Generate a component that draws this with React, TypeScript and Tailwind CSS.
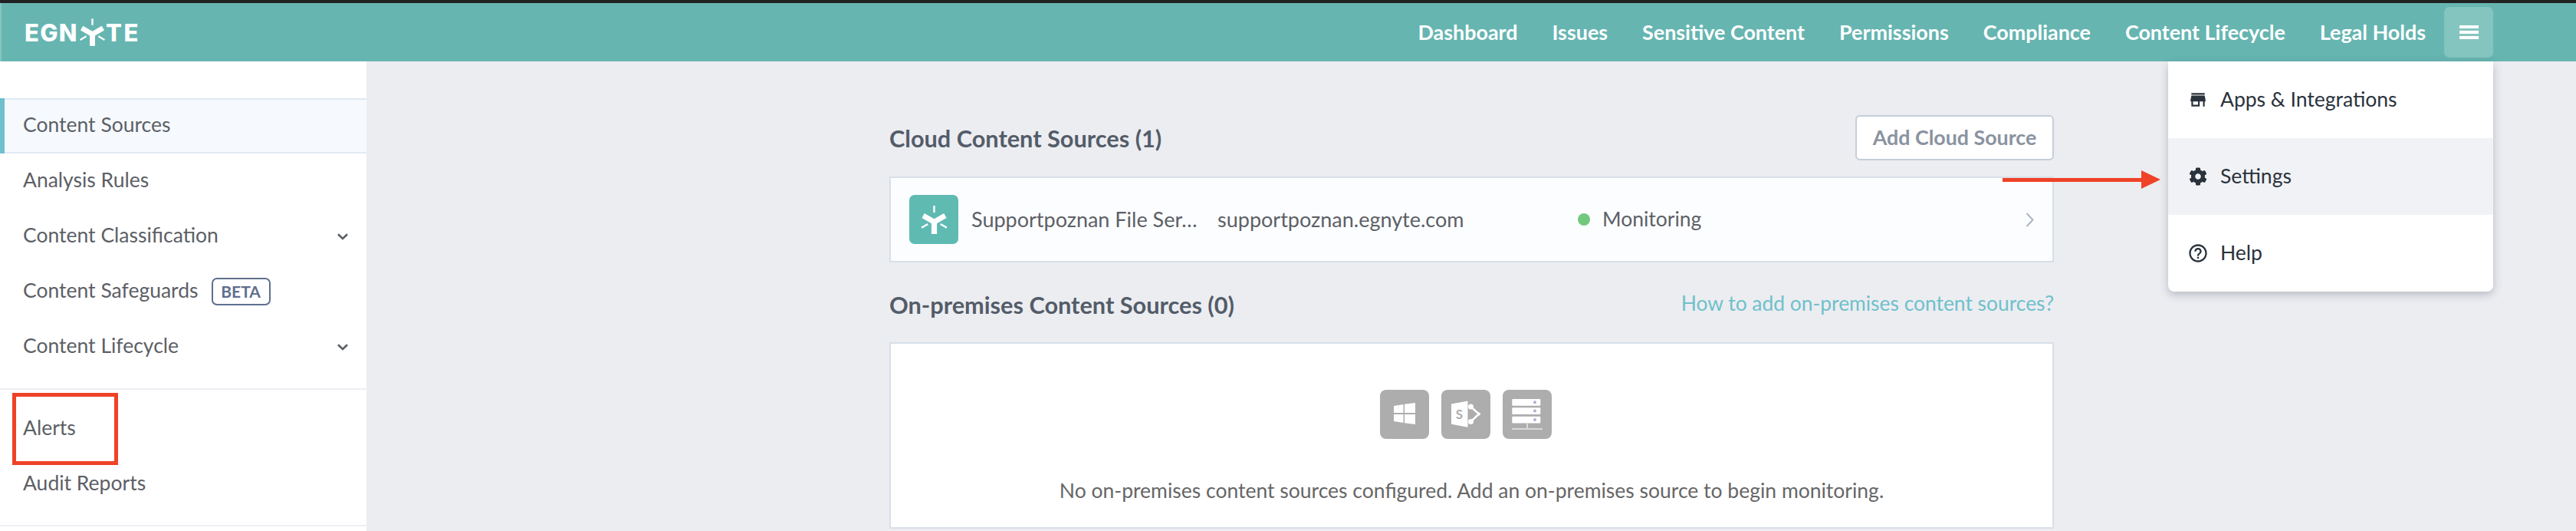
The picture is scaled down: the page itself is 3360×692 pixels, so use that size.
import React from "react";
import { MdStore, MdOutlineHelpOutline } from "react-icons/md";
import { FaCog } from "react-icons/fa";

const font = { fontFamily: '"Source Sans Pro", Lato, "Noto Sans", sans-serif' };

const navLinks = ["Dashboard", "Issues", "Sensitive Content", "Permissions", "Compliance", "Content Lifecycle", "Legal Holds"];

const Star: React.FC<{ className: string }> = ({ className }) => (
  <svg viewBox="0 0 100 108" className={className} fill="none" stroke="currentColor">
    <path d="M50 0V26M2 84L26 70M74 70L98 84" strokeWidth="7" />
    <path d="M8 38L50 62L92 38" strokeWidth="20" />
    <path d="M50 58V108" strokeWidth="21" />
  </svg>
);

const Chevron: React.FC = () => (
  <svg viewBox="0 0 14 9" className="h-[9px] w-[14px]" fill="none" stroke="#5c6066" strokeWidth="2.6">
    <path d="M1 1.2L7 7L13 1.2" />
  </svg>
);

const SideItem: React.FC<{ label: string; active?: boolean; chevron?: boolean; beta?: boolean }> = ({ label, active, chevron, beta }) => (
  <div
    className={`flex h-[72px] items-center pl-[30px] pr-[24px] text-[26.5px] text-[#5c6066] ${
      active ? "relative border-y-2 border-[#e0eaf5] bg-[#f6faff]" : ""
    }`}
  >
    {active && <div className="absolute -top-[2px] -bottom-[2px] left-0 w-[6px] bg-[#6fc0cc]" />}
    <span className="-mt-[3px]">{label}</span>
    {beta && (
      <span className="ml-[17px] flex h-[36px] w-[77px] items-center justify-center rounded-[7px] border-2 border-[#5f6f8f] text-[21px] font-bold text-[#5f6f8f]">
        BETA
      </span>
    )}
    {chevron && (
      <span className="ml-auto">
        <Chevron />
      </span>
    )}
  </div>
);

const Tile: React.FC<{ children: React.ReactNode }> = ({ children }) => (
  <div className="h-[64px] w-[64px] rounded-[8px] bg-[#adadad]">
    <svg viewBox="0 0 64 64" className="h-[64px] w-[64px]">
      {children}
    </svg>
  </div>
);

const MenuItem: React.FC<{ icon: React.ReactNode; label: string; hover?: boolean }> = ({ icon, label, hover }) => (
  <div className={`flex h-[100px] items-center pl-[27px] text-[26.5px] text-[#2a323c] ${hover ? "bg-[#f1f2f5]" : ""}`}>
    <span className="flex w-[24px] items-center justify-center">{icon}</span>
    <span className="ml-[17px]">{label}</span>
  </div>
);

const App: React.FC = () => {
  return (
    <div className="relative flex h-[692px] w-[3360px] flex-col overflow-hidden border-t-4 border-[#222222] bg-[#ecedf1]" style={font}>
      <header className="flex h-[76px] items-center border-l-2 border-[#85c5bf] bg-[#66b5b1] pl-[30px] pr-[108px] text-white">
        <div className="flex items-center text-[31px] font-extrabold leading-none">
          <span className="w-[72px] font-['Inter'] tracking-[1.3px]">EGN</span>
          <Star className="-mt-[1px] h-[36px] w-[33px] shrink-0" />
          <span className="ml-[1px] font-['Inter'] tracking-[2.5px]">TE</span>
        </div>
        <nav className="ml-auto flex items-center gap-[45px] text-[26.9px] font-bold">
          {navLinks.map((link) => (
            <span key={link}>{link}</span>
          ))}
        </nav>
        <button className="ml-[24px] flex h-[66px] w-[64px] flex-col items-center justify-center gap-[3px] rounded-[7px] bg-[#85c5bf]">
          <span className="h-[4px] w-[25px] bg-white" />
          <span className="h-[4px] w-[25px] bg-white" />
          <span className="h-[4px] w-[25px] bg-white" />
        </button>
      </header>

      <div className="flex min-h-0 flex-1">
        <aside className="w-[478px] bg-white pt-[48px]">
          <SideItem label="Content Sources" active />
          <SideItem label="Analysis Rules" />
          <SideItem label="Content Classification" chevron />
          <SideItem label="Content Safeguards" beta />
          <SideItem label="Content Lifecycle" chevron />
          <div className="mt-[18px] border-t-2 border-[#eeeff4] pt-[15px]">
            <SideItem label="Alerts" />
            <SideItem label="Audit Reports" />
          </div>
          <div className="mt-[17px] border-t-2 border-[#eeeff4]" />
        </aside>

        <main className="w-[1520px] pl-[682px] pr-0">
          <div className="w-[1519px]">
            <div className="mt-[70px] flex h-[59px] items-center justify-between">
              <h2 className="mt-[3px] text-[30.7px] font-bold text-[#535c69]">Cloud Content Sources (1)</h2>
              <button className="h-[59px] w-[259px] rounded-[6px] border-2 border-[#c5ced9] bg-white text-[26.8px] font-bold text-[#8a93a0]">
                Add Cloud Source
              </button>
            </div>
            <div className="mt-[21px] flex h-[112px] items-center border-2 border-[#d8dfe9] bg-[#fcfdff] pl-[24px] pr-[24px] text-[27px] text-[#5c6066]">
              <div className="flex h-[64px] w-[64px] items-center justify-center rounded-[7px] bg-[#5fbab2] text-white">
                <Star className="h-[37px] w-[35px]" />
              </div>
              <span className="ml-[17px] w-[321px] whitespace-nowrap">Supportpoznan File Ser…</span>
              <span className="w-[470px]">supportpoznan.egnyte.com</span>
              <span className="h-[16px] w-[16px] rounded-full bg-[#72c97e]" />
              <span className="ml-[16px] text-[26.5px]">Monitoring</span>
              <svg viewBox="0 0 11 19" className="ml-auto h-[19px] w-[11px]" fill="none" stroke="#adb5c2" strokeWidth="2">
                <path d="M1.5 1L9.5 9.5L1.5 18" />
              </svg>
            </div>
            <div className="mt-[38px] flex h-[36px] items-center justify-between">
              <h2 className="text-[30.7px] font-bold text-[#535c69]">On-premises Content Sources (0)</h2>
              <a className="-mt-[4px] text-[26.4px] text-[#6fc0cc]">How to add on-premises content sources?</a>
            </div>
            <div className="mt-[30px] flex h-[243px] flex-col items-center border-2 border-[#d8dfe9] bg-white pt-[60px] text-[26.5px] text-[#666666]">
              <div className="mr-[15px] flex gap-[16px]">
                <Tile>
                  <path d="M18 21L30.5 19V30H18ZM32 18.7L46 17V30H32ZM18 32H30.5V43L18 41ZM32 32H46V45L32 43.2Z" fill="#ffffff" />
                </Tile>
                <Tile>
                  <path d="M13 18.5L34.5 14.5V48.7L13 44.7Z" fill="#ffffff" />
                  <text x="23.5" y="38" textAnchor="middle" fontSize="17" fontWeight="700" fill="#adadad" fontFamily="Lato, sans-serif">S</text>
                  <path d="M38.5 22L49 31.5L38.5 41.5" fill="none" stroke="#ffffff" strokeWidth="2.5" />
                  <circle cx="38.5" cy="22" r="3.5" fill="#ffffff" />
                  <circle cx="49" cy="31.5" r="2" fill="#ffffff" />
                  <circle cx="38.5" cy="41.5" r="3.5" fill="#ffffff" />
                </Tile>
                <Tile>
                  {[12, 23.3, 34.7].map((y) => (
                    <g key={y}>
                      <rect x="12.3" y={y} width="37" height="8.7" rx="1" fill="#ffffff" />
                      <circle cx="42" cy={y + 4.3} r="2" fill="#b3aecb" />
                    </g>
                  ))}
                  <path d="M32 43.4V50M12 51H52" stroke="#d9d9d9" strokeWidth="2" fill="none" />
                </Tile>
              </div>
              <p className="mt-[48px]">No on-premises content sources configured. Add an on-premises source to begin monitoring.</p>
            </div>
          </div>
        </main>
      </div>

      {/* annotations and the open menu lie over the page */}
      <div className="absolute left-[16px] top-[508px] h-[94px] w-[138px] border-[5px] border-[#ef4227]" />
      <div className="absolute left-[2612px] top-[218px] flex items-center">
        <div className="h-[5px] w-[181px] bg-[#ef4227]" />
        <div className="h-0 w-0 border-y-[12.5px] border-l-[25px] border-y-transparent border-l-[#ef4227]" />
      </div>
      <div className="absolute left-[2828px] top-[76px] w-[424px] overflow-hidden rounded-b-[8px] bg-white shadow-[0_4px_12px_rgba(60,70,90,0.3)]">
        <MenuItem icon={<MdStore className="h-[26px] w-[26px] shrink-0" />} label="Apps & Integrations" />
        <MenuItem icon={<FaCog className="h-[24px] w-[24px] shrink-0" />} label="Settings" hover />
        <MenuItem icon={<MdOutlineHelpOutline className="h-[28px] w-[28px] shrink-0" />} label="Help" />
      </div>
    </div>
  );
};

export default App;
